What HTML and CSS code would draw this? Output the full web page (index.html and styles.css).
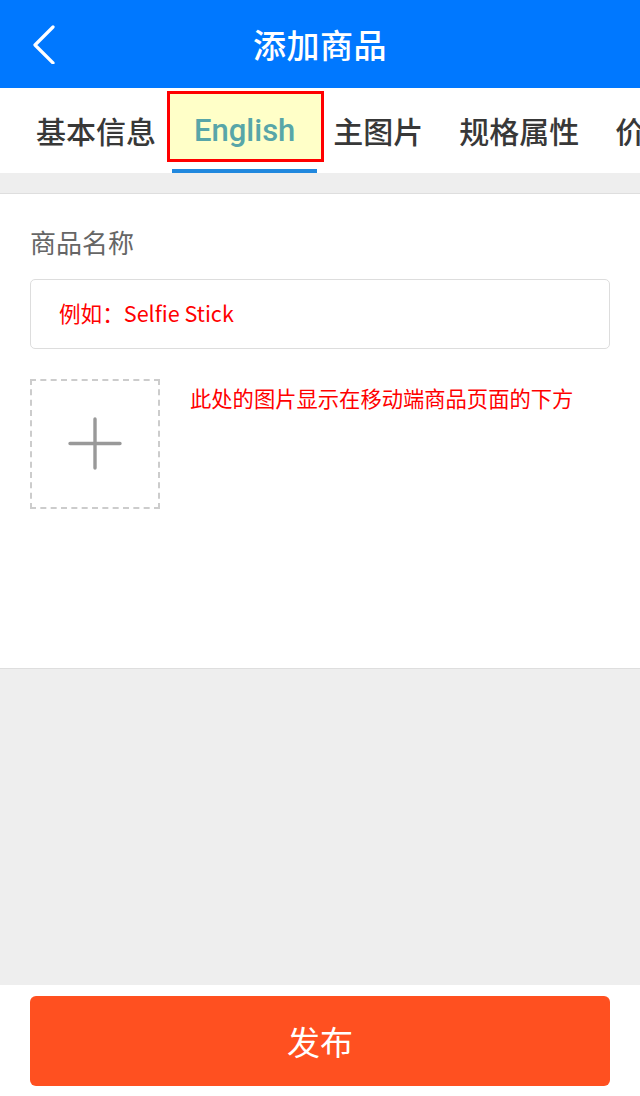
FILE: index.html
```html
<!DOCTYPE html>
<html lang="zh-CN">
<head>
<meta charset="utf-8">
<title>添加商品</title>
<link rel="stylesheet" href="styles.css">
</head>
<body>
<div class="page">
  <header class="topbar">
    <span class="back">
      <svg width="26" height="40" viewBox="0 0 26 40"><polyline points="21,3 3,21 21,39" fill="none" stroke="#fff" stroke-width="3.2" stroke-linecap="round" stroke-linejoin="round"/></svg>
    </span>
    <h1 class="title">添加商品</h1>
  </header>
  <nav class="tabs">
    <div class="tab">基本信息</div>
    <div class="tab active"><span class="hl"></span>English</div>
    <div class="tab">主图片</div>
    <div class="tab">规格属性</div>
    <div class="tab">价格库存</div>
  </nav>
  <div class="spacer"></div>
  <section class="form">
    <label class="label">商品名称</label>
    <div class="input"><span class="placeholder">例如：Selfie Stick</span></div>
    <div class="upload-row">
      <div class="upload">
        <svg width="54" height="54" viewBox="0 0 54 54"><path d="M27 2V51M2 26.5H52" stroke="#999" stroke-width="3.4" stroke-linecap="round"/></svg>
      </div>
      <p class="hint">此处的图片显示在移动端商品页面的下方</p>
    </div>
  </section>
  <div class="fill"></div>
  <footer class="footer">
    <button class="publish">发布</button>
  </footer>
</div>
</body>
</html>
```
FILE: styles.css
```css
* { box-sizing: border-box; }
html, body { margin: 0; padding: 0; }
body {
  width: 640px;
  height: 1096px;
  font-family: "Noto Sans CJK SC", "Noto Sans", sans-serif;
  background: #eeeeee;
  overflow: hidden;
}
.page {
  display: flex;
  flex-direction: column;
  height: 1096px;
}
.topbar {
  height: 88px;
  flex-shrink: 0;
  background: #0078ff;
  display: flex;
  align-items: center;
  position: relative;
}
.back {
  position: absolute;
  left: 32px;
  top: 24px;
  width: 26px;
  height: 40px;
}
.back svg { display: block; }
.title {
  margin: 0;
  width: 100%;
  text-align: center;
  color: #fff;
  font-size: 33px;
  font-weight: 500;
  letter-spacing: 0.5px;
}
.tabs {
  height: 85px;
  flex-shrink: 0;
  background: #fff;
  display: flex;
  padding-left: 18px;
  overflow: hidden;
}
.tab {
  flex-shrink: 0;
  padding: 0 18px;
  font-size: 30px;
  font-weight: 500;
  line-height: 85px;
  color: #383838;
  white-space: nowrap;
  position: relative;
}
.tab.active {
  z-index: 0;
  color: #58a6a8;
  font-family: "Roboto", "Noto Sans", sans-serif;
  font-size: 31px;
  padding: 0 20px;
}
.tab.active::after {
  content: "";
  position: absolute;
  left: -2px;
  right: -2px;
  bottom: 0;
  height: 4px;
  background: #2188de;
}
.tab.active .hl {
  position: absolute;
  left: -7px;
  right: -9px;
  top: 3px;
  bottom: 11px;
  border: 3px solid #f00;
  background: #ffffc8;
  z-index: -1;
}
.spacer {
  height: 21px;
  flex-shrink: 0;
  background: #eeeeee;
  border-bottom: 1px solid #dedede;
}
.form {
  flex-shrink: 0;
  height: 475px;
  background: #fff;
  border-bottom: 1px solid #dedede;
  padding: 29px 30px 0;
}
.label {
  display: block;
  font-size: 26px;
  color: #666;
  line-height: 38px;
}
.input {
  margin-top: 18px;
  height: 70px;
  border: 1px solid #dddddd;
  border-radius: 5px;
  display: flex;
  align-items: center;
  padding: 0 0 4px 28px;
}
.placeholder {
  color: #ff0000;
  font-size: 21.6px;
}
.upload-row {
  display: flex;
  margin-top: 30px;
}
.upload {
  width: 130px;
  height: 130px;
  flex-shrink: 0;
  border: 2px dashed #cccccc;
  display: flex;
  align-items: center;
  justify-content: center;
}
.upload svg { display: block; }
.hint {
  margin: 4px 0 0 30px;
  color: #ff0000;
  font-size: 21.3px;
  line-height: 30px;
}
.fill { flex: 1; }
.footer {
  height: 111px;
  flex-shrink: 0;
  background: #fff;
  padding: 11px 30px 0;
}
.publish {
  display: block;
  width: 100%;
  height: 90px;
  border: none;
  border-radius: 6px;
  background: #ff5020;
  color: #fff;
  font-family: "Noto Sans CJK SC", "Noto Sans", sans-serif;
  font-size: 33px;
  padding: 0;
}
```
